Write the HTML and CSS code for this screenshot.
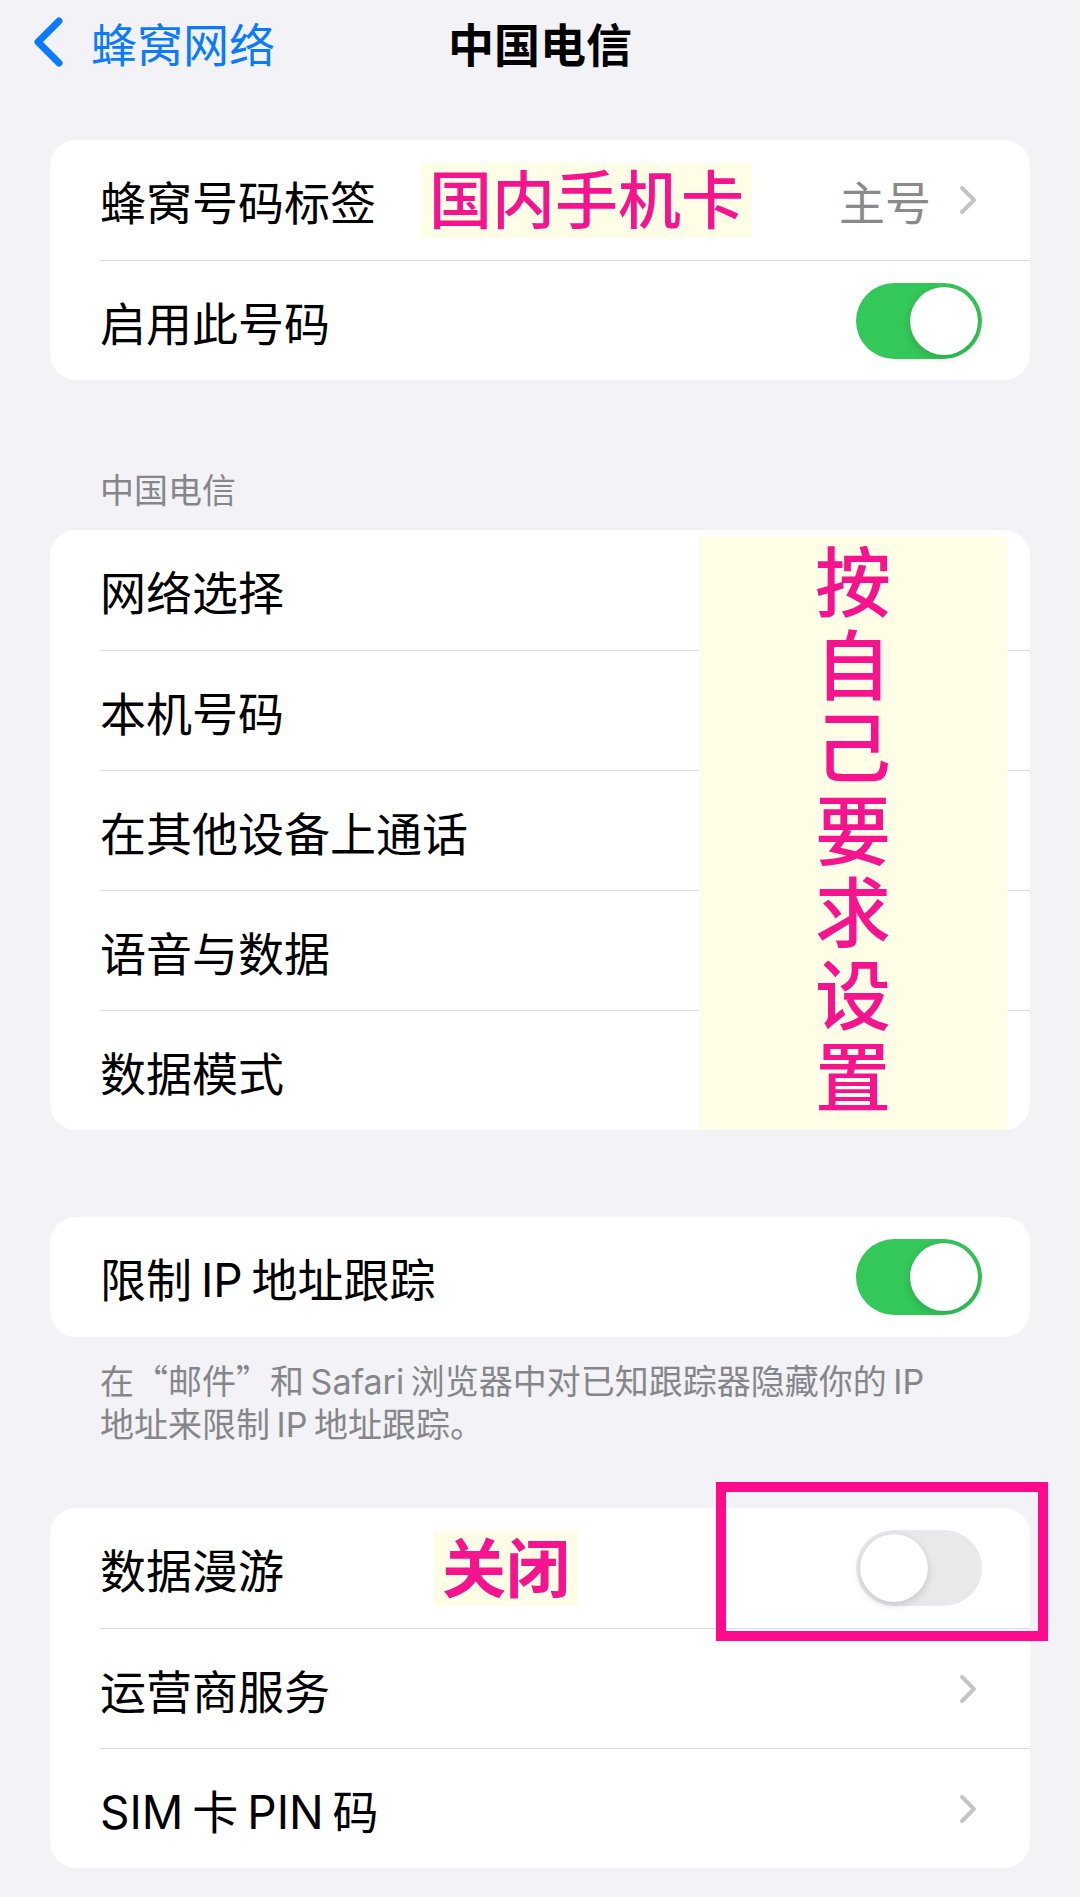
FILE: index.html
```html
<!DOCTYPE html>
<html>
<head>
    <meta charset="utf-8">
    <title>中国电信</title>
    <link rel="stylesheet" href="styles.css">
</head>
<body>
    <header class="nav-bar">
        <a class="nav-back" href="#">
            <svg class="nav-back_icon" viewBox="0 0 30 50" width="30" height="50">
                <path d="M26 4 L5 25 L26 46" fill="none" stroke="currentColor" stroke-width="7" stroke-linecap="round" stroke-linejoin="round"/>
            </svg>
            <span>蜂窝网络</span>
        </a>
        <h1 class="nav-title">中国电信</h1>
        <div></div>
    </header>

    <main class="settings">

        <section class="group group-first">
            <div class="row">
                <div class="row-main">
                    <span class="row-label row-label_noted">蜂窝号码标签</span>
                    <span class="note note-sim">国内手机卡</span>
                    <span class="row-value">主号</span>
                    <svg class="chevron" viewBox="0 0 18 30" width="18" height="30">
                        <path d="M3 3 L15 15 L3 27" fill="none" stroke="currentColor" stroke-width="4" stroke-linecap="round" stroke-linejoin="round"/>
                    </svg>
                </div>
            </div>
            <div class="row">
                <div class="row-main">
                    <span class="row-label">启用此号码</span>
                    <span class="switch switch-on"><span class="switch_knob"></span></span>
                </div>
            </div>
        </section>

        <h2 class="group-header">中国电信</h2>

        <section class="group">
            <div class="row"><div class="row-main"><span class="row-label">网络选择</span></div></div>
            <div class="row"><div class="row-main"><span class="row-label">本机号码</span></div></div>
            <div class="row"><div class="row-main"><span class="row-label">在其他设备上通话</span></div></div>
            <div class="row"><div class="row-main"><span class="row-label">语音与数据</span></div></div>
            <div class="row"><div class="row-main"><span class="row-label">数据模式</span></div></div>

            <!-- annotation pasted over the right side of the list -->
            <div class="note-column">
                <div class="note-column_text">按自己要求设置</div>
            </div>
        </section>

        <section class="group group-spaced">
            <div class="row">
                <div class="row-main">
                    <span class="row-label">限制 IP 地址跟踪</span>
                    <span class="switch switch-on"><span class="switch_knob"></span></span>
                </div>
            </div>
        </section>

        <p class="group-footer">在<span class="cjk">“邮件”</span>和 Safari 浏览器中对已知跟踪器隐藏你的 IP<br>地址来限制 IP 地址跟踪。</p>

        <section class="group">
            <div class="row">
                <div class="row-main">
                    <span class="row-label row-label_noted">数据漫游</span>
                    <span class="note note-off">关闭</span>
                    <span class="switch"><span class="switch_knob"></span></span>
                </div>
            </div>
            <div class="row">
                <div class="row-main">
                    <span class="row-label">运营商服务</span>
                    <svg class="chevron" viewBox="0 0 18 30" width="18" height="30">
                        <path d="M3 3 L15 15 L3 27" fill="none" stroke="currentColor" stroke-width="4" stroke-linecap="round" stroke-linejoin="round"/>
                    </svg>
                </div>
            </div>
            <div class="row">
                <div class="row-main">
                    <span class="row-label">SIM 卡 PIN 码</span>
                    <svg class="chevron" viewBox="0 0 18 30" width="18" height="30">
                        <path d="M3 3 L15 15 L3 27" fill="none" stroke="currentColor" stroke-width="4" stroke-linecap="round" stroke-linejoin="round"/>
                    </svg>
                </div>
            </div>

            <!-- pink frame around the roaming switch -->
            <div class="highlight-frame"></div>
        </section>

    </main>
</body>
</html>
```

FILE: styles.css
```css
body {
    margin: 0;
    background-color: #f2f2f7;
    color: #000000;
    font-family: Inter, "Noto Sans CJK SC", sans-serif;
}

.cjk {
    font-family: "Noto Sans CJK SC", sans-serif;
}

/* top navigation */
.nav-bar {
    display: grid;
    grid-template-columns: 1fr auto 1fr;
    align-items: center;
    height: 84px;
}

.nav-back {
    display: flex;
    align-items: center;
    gap: 28px;
    padding-left: 33px;
    color: #0a7aff;
    text-decoration: none;
    font-size: 46px;
}

.nav-back_icon {
    display: block;
}

.nav-title {
    margin: 0;
    font-size: 46px;
    font-weight: 700;
}

/* grouped lists */
.group {
    position: relative;
    margin: 0 50px;
    background-color: #ffffff;
    border-radius: 26px;
}

.group-first {
    margin-top: 56px;
}

.group-spaced {
    margin-top: 87px;
}

.group-header {
    margin: 0;
    padding: 89px 0 17px 100px;
    font-size: 34px;
    font-weight: 400;
    line-height: 44px;
    color: #86868a;
}

.group-footer {
    margin: 0;
    padding: 21px 50px 62px 100px;
    font-size: 34px;
    line-height: 43px;
    color: #86868a;
    word-spacing: -3px;
}

.row {
    height: 120px;
    padding-left: 50px;
    display: flex;
}

.row-main {
    flex: 1;
    display: flex;
    align-items: center;
    padding-right: 48px;
    font-size: 46px;
    word-spacing: -4px;
}

.row + .row .row-main {
    border-top: 1px solid #dedee2;
}

.row-label {
    margin-right: auto;
}

.row-label_noted {
    margin-right: 0;
}

.row-value {
    color: #8a8a8e;
    margin-right: 28px;
}

.chevron {
    display: block;
    color: #c4c4c7;
    margin-right: 5px;
}

/* switches */
.switch {
    position: relative;
    width: 126px;
    height: 76px;
    border-radius: 38px;
    background-color: #e9e9eb;
    flex-shrink: 0;
}

.switch_knob {
    position: absolute;
    top: 4px;
    left: 4px;
    width: 68px;
    height: 68px;
    border-radius: 50%;
    background-color: #ffffff;
    box-shadow: 0 3px 8px rgba(0, 0, 0, 0.15), 0 0 1px rgba(0, 0, 0, 0.1);
}

.switch-on {
    background-color: #34c759;
}

.switch-on .switch_knob {
    left: 54px;
}

/* pink annotations */
.note {
    background-color: #fefde6;
    color: #f5148e;
    line-height: 75px;
    margin-right: auto;
    padding: 0 8px;
}

.note-sim {
    margin-left: 45px;
    font-size: 63px;
    font-weight: 500;
}

.note-off {
    margin-left: 150px;
    font-size: 64px;
    font-weight: 700;
}

.note-column {
    position: absolute;
    top: 6px;
    left: 649px;
    width: 308px;
    bottom: 0;
    background-color: #fefde6;
}

.note-column_text {
    width: 1em;
    margin: 0 auto;
    padding-top: 6px;
    font-size: 76px;
    line-height: 82.5px;
    font-weight: 500;
    color: #f5148e;
    word-break: break-all;
}

.highlight-frame {
    position: absolute;
    top: -26px;
    left: 666px;
    width: 332px;
    height: 159px;
    box-sizing: border-box;
    border: 10px solid #ff0a8c;
}
```
